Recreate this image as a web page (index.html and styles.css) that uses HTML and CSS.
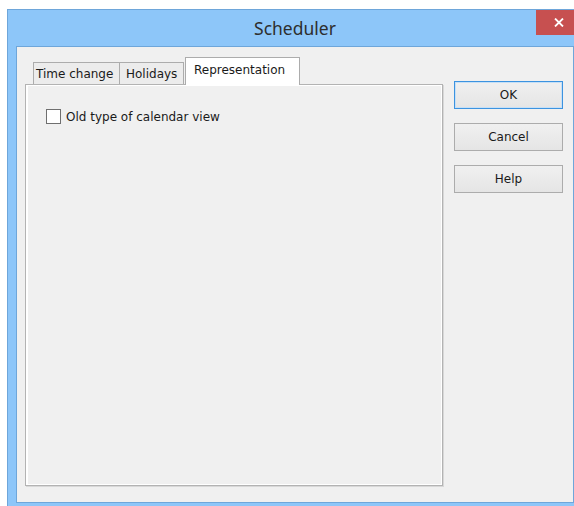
FILE: index.html
```html
<!DOCTYPE html>
<html lang="en">
<head>
<meta charset="utf-8">
<title>Scheduler</title>
<link rel="stylesheet" href="styles.css">
</head>
<body>
<div class="window">
  <div class="titlebar">
    <span class="title">Scheduler</span>
    <button class="close" aria-label="Close">
      <svg width="10" height="9" viewBox="0 0 10 9"><path d="M1 0.5 L9 8.5 M9 0.5 L1 8.5" stroke="#fff" stroke-width="1.8" fill="none"/></svg>
    </button>
  </div>
  <div class="client">
    <div class="tabcontrol">
      <div class="tabs">
        <div class="tab tab-first">Time change</div>
        <div class="tab tab-mid">Holidays</div>
        <div class="tab tab-active">Representation</div>
      </div>
      <div class="panel">
        <label class="check">
          <span class="box"></span>
          <span class="check-label">Old type of calendar view</span>
        </label>
      </div>
    </div>
    <div class="buttons">
      <button class="btn btn-default">OK</button>
      <button class="btn">Cancel</button>
      <button class="btn">Help</button>
    </div>
  </div>
</div>
</body>
</html>
```
FILE: styles.css
```css
html, body {
  margin: 0;
  padding: 0;
  background: #ffffff;
  overflow: hidden;
}

.window {
  box-sizing: border-box;
  margin: 9px 0 0 7px;
  width: 576px;
  height: 498px;
  background: #8dc6f9;
  border: 1px solid #6ea6da;
  display: flex;
  flex-direction: column;
  font-family: "DejaVu Sans", "Noto Sans", sans-serif;
}

/* caption */
.titlebar {
  position: relative;
  height: 36px;
  display: flex;
  align-items: center;
  justify-content: center;
}

.title {
  font-family: "Noto Sans", sans-serif;
  font-size: 17.5px;
  color: #2e2e2e;
  margin-top: -1px;
}

.close {
  position: absolute;
  left: 528px;
  top: 0;
  width: 46px;
  height: 25px;
  border: none;
  padding: 0;
  background: #c75050;
  display: flex;
  align-items: center;
  justify-content: center;
}

/* dialog body */
.client {
  flex: 1;
  margin: 0 8px 3px 8px;
  border: 1px solid #6ea6da;
  background: #f0f0f0;
  display: flex;
  align-items: flex-start;
  padding: 10px 0 0 8px;
}

.tabcontrol {
  width: 418px;
  height: 429px;
  display: flex;
  flex-direction: column;
}

.tabs {
  display: flex;
  align-items: flex-end;
  height: 27px;
  padding-left: 8px;
  position: relative;
  z-index: 1;
  font-size: 12px;
  color: #1a1a1a;
}

.tab {
  box-sizing: border-box;
  height: 22px;
  background: #ececec;
  border: 1px solid #acacac;
  border-bottom: none;
  display: flex;
  align-items: center;
  justify-content: flex-start;
}

.tab-first {
  width: 87px;
  padding-left: 2px;
}

.tab-mid {
  width: 64px;
  border-left: none;
  padding-left: 6px;
}

.tab-active {
  width: 115px;
  height: 28px;
  margin-left: 1px;
  margin-bottom: -1px;
  background: #ffffff;
  align-items: flex-start;
  padding: 5px 0 0 8px;
}

.panel {
  flex: 1;
  border: 1px solid #b3b3b3;
  background: #f0f0f0;
  box-shadow: inset 2px 1px 0 #ffffff, inset -1px -1px 0 #ffffff, 1px 1px 0 #d8d8d8;
  padding: 24px 0 0 20px;
}

.check {
  display: flex;
  align-items: center;
  gap: 5px;
  font-size: 12px;
  color: #1a1a1a;
}

.box {
  box-sizing: border-box;
  width: 15px;
  height: 15px;
  border: 1px solid #6f6f6f;
  background: #ffffff;
}

/* command buttons */
.buttons {
  display: flex;
  flex-direction: column;
  gap: 14px;
  margin: 24px 0 0 11px;
}

.btn {
  box-sizing: border-box;
  width: 109px;
  height: 28px;
  border: 1px solid #acacac;
  background: linear-gradient(#f0f0f0, #e5e5e5);
  font-family: "DejaVu Sans", "Noto Sans", sans-serif;
  font-size: 12px;
  color: #1a1a1a;
  padding: 0;
}

.btn-default {
  border-color: #3c93e0;
  box-shadow: inset 0 0 0 1px #c7e0f6;
}
```
